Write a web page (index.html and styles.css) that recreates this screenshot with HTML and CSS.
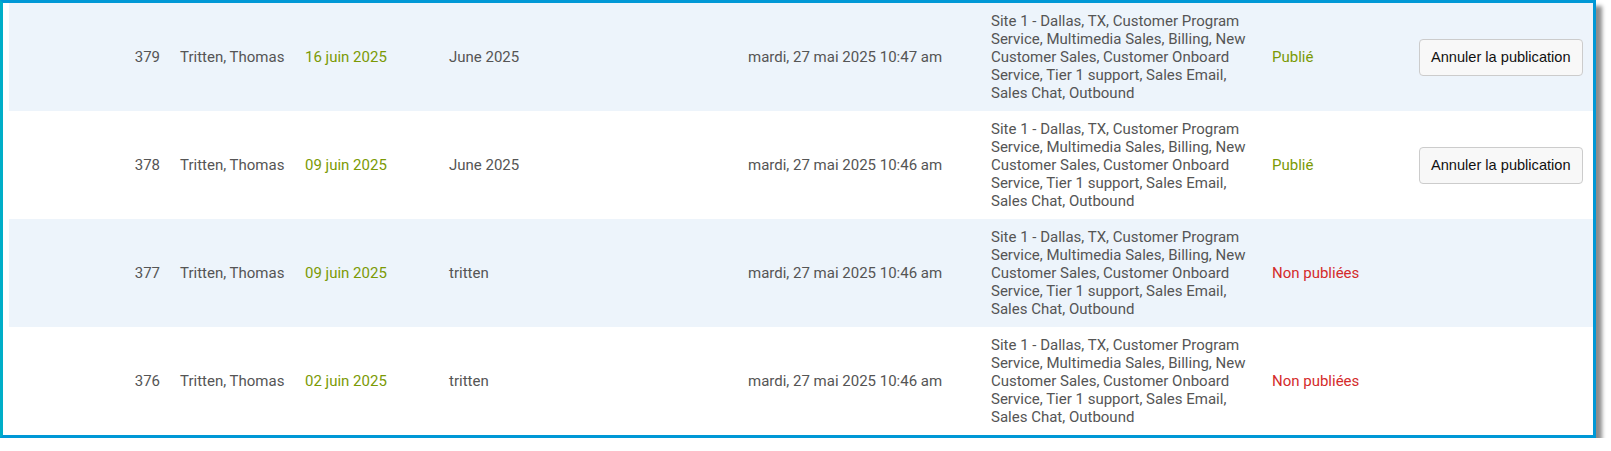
FILE: index.html
```html
<!DOCTYPE html>
<html lang="fr">
<head>
    <meta charset="UTF-8">
    <meta name="viewport" content="width=device-width, initial-scale=1.0">
    <title>Publications</title>
    <link rel="stylesheet" href="styles.css">
</head>
<body>
    <div class="frame">
        <table class="pub-table">
            <colgroup>
                <col class="c-id">
                <col class="c-name">
                <col class="c-date">
                <col class="c-label">
                <col class="c-created">
                <col class="c-sites">
                <col class="c-status">
                <col class="c-action">
            </colgroup>
            <tbody>
                <tr class="odd">
                    <td class="id">379</td>
                    <td>Tritten, Thomas</td>
                    <td class="green">16 juin 2025</td>
                    <td>June 2025</td>
                    <td>mardi, 27 mai 2025 10:47 am</td>
                    <td class="sites">Site 1 - Dallas, TX, Customer Program Service, Multimedia Sales, Billing, New Customer Sales, Customer Onboard Service, Tier 1 support, Sales Email, Sales Chat, Outbound</td>
                    <td class="green">Publié</td>
                    <td><button class="btn">Annuler la publication</button></td>
                </tr>
                <tr>
                    <td class="id">378</td>
                    <td>Tritten, Thomas</td>
                    <td class="green">09 juin 2025</td>
                    <td>June 2025</td>
                    <td>mardi, 27 mai 2025 10:46 am</td>
                    <td class="sites">Site 1 - Dallas, TX, Customer Program Service, Multimedia Sales, Billing, New Customer Sales, Customer Onboard Service, Tier 1 support, Sales Email, Sales Chat, Outbound</td>
                    <td class="green">Publié</td>
                    <td><button class="btn">Annuler la publication</button></td>
                </tr>
                <tr class="odd">
                    <td class="id">377</td>
                    <td>Tritten, Thomas</td>
                    <td class="green">09 juin 2025</td>
                    <td>tritten</td>
                    <td>mardi, 27 mai 2025 10:46 am</td>
                    <td class="sites">Site 1 - Dallas, TX, Customer Program Service, Multimedia Sales, Billing, New Customer Sales, Customer Onboard Service, Tier 1 support, Sales Email, Sales Chat, Outbound</td>
                    <td class="red">Non publiées</td>
                    <td></td>
                </tr>
                <tr>
                    <td class="id">376</td>
                    <td>Tritten, Thomas</td>
                    <td class="green">02 juin 2025</td>
                    <td>tritten</td>
                    <td>mardi, 27 mai 2025 10:46 am</td>
                    <td class="sites">Site 1 - Dallas, TX, Customer Program Service, Multimedia Sales, Billing, New Customer Sales, Customer Onboard Service, Tier 1 support, Sales Email, Sales Chat, Outbound</td>
                    <td class="red">Non publiées</td>
                    <td></td>
                </tr>
            </tbody>
        </table>
    </div>
</body>
</html>
```

FILE: styles.css
```css
body, html {
    margin: 0;
    padding: 0;
    background-color: #fff;
    font-family: Roboto, "Liberation Sans", sans-serif;
}

.frame {
    width: 1596px;
    box-sizing: border-box;
    border: 3px solid #0098d6;
    border-left-color: #00aec8;
    padding: 0 0 0 6px;
    background-color: #fff;
    box-shadow: 6px 6px 4px rgba(0, 0, 0, 0.45);
}

.pub-table {
    width: 100%;
    border-collapse: collapse;
    table-layout: fixed;
    font-size: 15px;
    line-height: 18px;
    color: #555;
}

.c-id { width: 161px; }
.c-name { width: 125px; }
.c-date { width: 144px; }
.c-label { width: 299px; }
.c-created { width: 243px; }
.c-sites { width: 281px; }
.c-status { width: 147px; }

.pub-table td {
    padding: 9px 10px;
    vertical-align: middle;
}

.pub-table tr.odd td {
    background-color: #edf4fb;
}

.pub-table td.id {
    text-align: right;
}

.pub-table td.sites {
    padding-right: 8px;
}

.green {
    color: #7b9a05;
}

.red {
    color: #d42b2b;
}

.btn {
    font-family: "Liberation Sans", Arial, sans-serif;
    font-size: 14.6px;
    color: #111;
    background-color: #f8f8f8;
    border: 1px solid #ccc;
    border-radius: 4px;
    height: 37px;
    padding: 0 11px;
    cursor: pointer;
}
```
